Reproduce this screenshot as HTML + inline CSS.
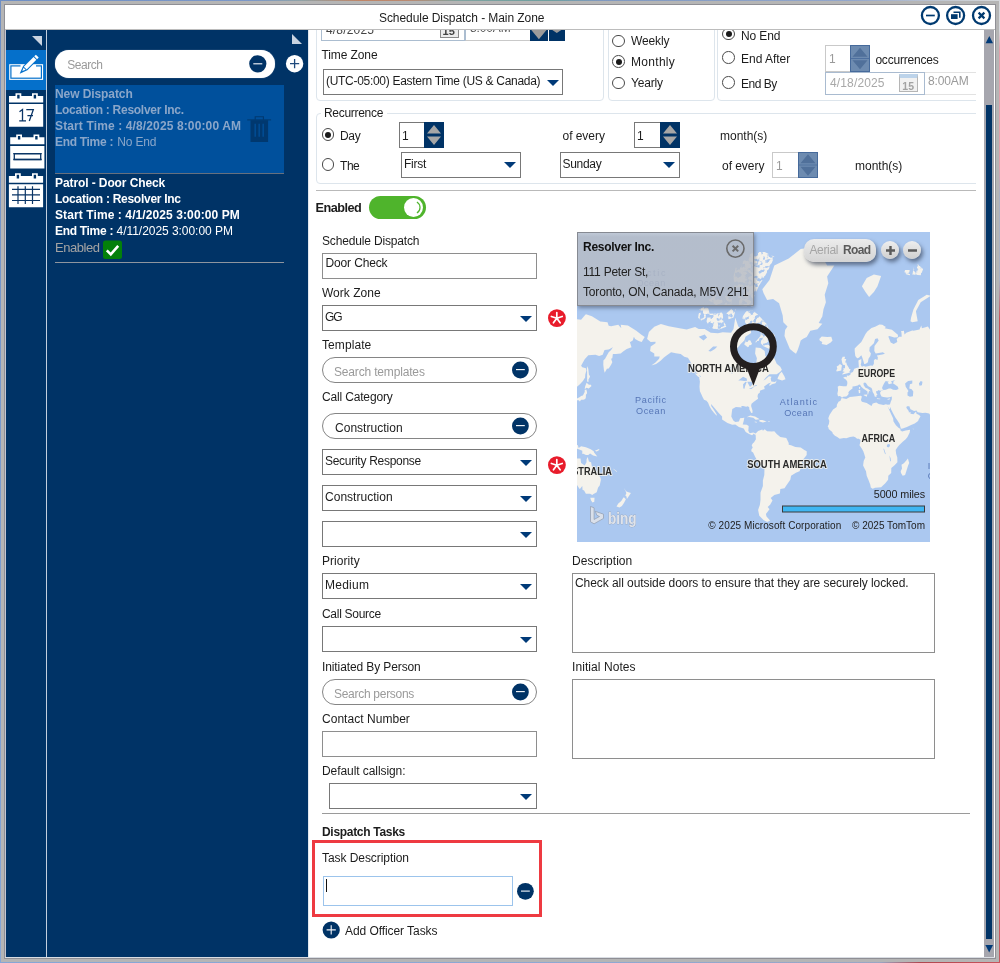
<!DOCTYPE html>
<html>
<head>
<meta charset="utf-8">
<title>Schedule Dispatch - Main Zone</title>
<style>
html,body{margin:0;padding:0;}
body{width:1000px;height:963px;overflow:hidden;position:relative;background:#b5b5b5;font-family:"Liberation Sans",sans-serif;font-size:12px;color:#1c1c1c;}
.a{position:absolute;}
.t{position:absolute;white-space:nowrap;line-height:16px;height:16px;}
.b{font-weight:bold;}
.box{position:absolute;box-sizing:border-box;border:1px solid #787878;background:#fff;}
.pill{position:absolute;box-sizing:border-box;border:1px solid #858585;background:#fff;border-radius:13px;}
.grp{position:absolute;box-sizing:border-box;border:1px solid #dde5ec;border-radius:4px;}
.arr{position:absolute;width:0;height:0;border-left:6px solid transparent;border-right:6px solid transparent;border-top:6px solid #003a78;}
.navy{background:#003366;}
.rad{position:absolute;box-sizing:border-box;margin:0.200px;width:12.600px;height:12.600px;border:1px solid #4a4a4a;border-radius:50%;background:#fff;}
.rad.on:after{content:"";position:absolute;left:2.5px;top:2.5px;width:6px;height:6px;border-radius:50%;background:#1a1a1a;}
.spin{position:absolute;background:#003366;}
.spin.dis{background:#6d8bb0;}
.ph{color:#9a9a9a;}
</style>
</head>
<body>
<div id="root" style="position:absolute;left:0;top:0;width:1000px;height:963px;will-change:transform;">
<!-- outer desktop bleed -->
<div class="a" style="left:0;top:0;width:1000px;height:1px;background:linear-gradient(90deg,#6f8fc4 0%,#7c98c8 25%,#8fa3a8 30%,#c08566 36%,#b98a72 41%,#7fa3a0 46%,#6fa0a0 55%,#8099c0 60%,#93a7cc 85%,#c4c9d1 95%,#d5d8dc 100%);"></div>
<div class="a" style="left:0;top:0;width:1px;height:963px;background:linear-gradient(180deg,#6f8fc4,#86a6d6);"></div>
<div class="a" style="left:999px;top:1px;width:1px;height:962px;background:linear-gradient(180deg,#d5d8dc 0%,#d8dadf 3%,#e0a0ab 5%,#e0a0ab 17%,#a9b0c4 20%,#a9b0c4 29%,#c9545c 33%,#c9545c 100%);"></div>
<div class="a" style="left:0;top:962px;width:1000px;height:1px;background:linear-gradient(90deg,#86a6d6 0%,#8fa8d2 60%,#9aa6c4 88%,#b0474f 92%,#c9545c 100%);"></div>
<!-- window frame -->
<div class="a" style="left:4px;top:4px;width:992px;height:955px;background:#8f8f95;"></div>
<div class="a" style="left:5px;top:5px;width:990px;height:953px;background:#fff;"></div>
<!-- title bar -->
<div class="a" style="left:5px;top:29px;width:990px;height:1px;background:#bcbcbc;"></div>
<div class="t" id="title" style="left:379px;top:10px;letter-spacing:-0.070px;">Schedule Dispatch - Main Zone</div>
<svg class="a" style="left:918px;top:4px;" width="76" height="24" viewBox="918 4 76 24">
 <g fill="none" stroke="#003a70" stroke-width="2.300">
  <circle cx="930.4" cy="15.5" r="8.5"/><circle cx="955.6" cy="15.5" r="8.5"/><circle cx="981.5" cy="15.5" r="8.5"/>
  <path d="M926 15.500h8.800" stroke-width="1.700"/>
  <path d="M978.6 12.6l5.8 5.8M984.4 12.6l-5.8 5.8" stroke-width="2.2"/>
  <path d="M953.5 12.3h6.3v5.4" stroke-width="1.6"/>
 </g>
 <rect x="951" y="14.2" width="6.6" height="4.8" fill="#003a70"/>
</svg>
<!-- left icon strip -->
<div class="a" style="left:5px;top:30px;width:1px;height:927px;background:#c4c6d2;"></div>
<div class="a navy" style="left:6px;top:30px;width:40px;height:927px;"></div>
<div class="a" style="left:5px;top:957px;width:990px;height:1px;background:#d9dde3;"></div>
<div class="a" style="left:46px;top:30px;width:1px;height:927px;background:#c3cfde;"></div>
<div class="a navy" style="left:47px;top:30px;width:261px;height:927px;"></div>
<div class="a" style="left:6px;top:50px;width:40px;height:40px;background:#0570cb;"></div>
<svg class="a" style="left:30px;top:34px;" width="14" height="14" viewBox="30 34 14 14"><path d="M32 36h10v10z" fill="#c9d4e1"/></svg>
<svg class="a" style="left:6px;top:50px;" width="40" height="160" viewBox="6 50 40 160">
 <!-- edit icon -->
 <rect x="9.200" y="64.200" width="33.900" height="15.700" fill="#fff"/>
 <rect x="10.300" y="65.300" width="31.700" height="13.500" fill="#0570cb"/>
 <rect x="11.500" y="66.500" width="29.300" height="11.100" fill="#fff"/>
 <path d="M20.500 64.800h15.500v2.400h-15.500z" fill="#fff"/>
 <path d="M37.57 60.06L33.34 55.81L23.13 65.96L19.67 73.63L27.36 70.21z" fill="#0570cb"/>
 <path d="M38.71 57.52L35.89 54.68L34.26 56.30L37.08 59.14z" fill="#fff"/>
 <path d="M36.37 59.84L33.55 57.01L23.83 66.67L26.65 69.50z" fill="#fff"/>
 <path d="M25.66 69.78L23.55 67.65L22.22 71.09z" fill="#fff"/>
 <!-- calendar 17 -->
 <path d="M9 96h34.200v6.600h-34.200z M9 104h34.200v22.800h-34.200z" fill="#fff"/>
 <path d="M15.500 93.200h5.800v4h-5.800z M32 93.200h5.800v4h-5.800z" fill="#fff"/>
 <path d="M17.200 94.800h2.400v3.600h-2.400z M33.700 94.800h2.400v3.600h-2.400z" fill="#003366"/>
 <path d="M19.500 111.800l3-2.200v11.100M19.200 120.800h6.800M26.300 109.600h7l-4 11.400M27.400 115.600h5.600" fill="none" stroke="#0a3566" stroke-width="1.300"/>
 <!-- week calendar -->
 <path d="M10.200 137.200h34.200v7h-34.200z M10.200 146h34.200v22.600h-34.200z" fill="#fff"/>
 <path d="M16.200 134.400h5.800v4h-5.800z M33.500 134.400h5.800v4h-5.800z" fill="#fff"/>
 <path d="M17.900 136h2.400v3.600h-2.400z M35.200 136h2.400v3.600h-2.400z" fill="#003366"/>
 <rect x="14.300" y="153.700" width="26.400" height="5.800" fill="none" stroke="#0a3566" stroke-width="1.300"/>
 <path d="M13.300 153.700h28.400M13.300 159.500h28.400" stroke="#0a3566" stroke-width="1.300"/>
 <!-- month calendar -->
 <path d="M8.900 176h34.200v6.800h-34.200z M8.900 184.300h34.200v23h-34.200z" fill="#fff"/>
 <path d="M15 173.200h5.800v4h-5.800z M32 173.200h5.800v4h-5.800z" fill="#fff"/>
 <path d="M16.700 174.800h2.400v3.600h-2.400z M33.700 174.800h2.400v3.600h-2.400z" fill="#003366"/>
 <path d="M18 186.200v17.800M25.300 186.200v17.800M32.500 186.200v17.800M12 189.300h28M12 194.900h28M12 200.500h28" stroke="#0a3566" stroke-width="1.200"/>
</svg>

<!-- left list panel -->
<svg class="a" style="left:290px;top:32px;" width="14" height="14" viewBox="290 32 14 14"><path d="M292 34v10h10z" fill="#c9d4e1"/></svg>
<div class="a" style="left:54.500px;top:50px;width:220px;height:28px;border-radius:14px;background:#fff;box-shadow:0 0 1px #9fb0c4;"></div>
<div class="t ph" id="search" style="left:67.200px;top:56.700px;letter-spacing:-0.462px;">Search</div>
<svg class="a" style="left:248px;top:54px;" width="20" height="20" viewBox="0 0 20 20"><circle cx="9.800" cy="9.800" r="8.600" fill="#003366"/><path d="M5.300 9.800h9" stroke="#eef2f7" stroke-width="1.150"/></svg>
<svg class="a" style="left:285px;top:54px;" width="20" height="20" viewBox="0 0 20 20"><circle cx="9.600" cy="9.700" r="8.700" fill="#fff"/><path d="M5 9.700h9.200M9.600 5.100v9.200" stroke="#1f4a7c" stroke-width="1.300"/></svg>
<div class="a" style="left:55px;top:85px;width:229px;height:88px;background:#00509c;"></div>
<div class="a" style="left:55px;top:173px;width:229px;height:1px;background:#67707e;"></div>
<div class="t b" id="l1" style="left:55px;top:86px;color:#8aa6c9;letter-spacing:-0.082px;">New Dispatch</div>
<div class="t b" id="l2" style="left:55px;top:102px;color:#8aa6c9;letter-spacing:-0.278px;">Location : Resolver Inc.</div>
<div class="t b" id="l3" style="left:55px;top:118px;color:#8aa6c9;letter-spacing:0.126px;">Start Time : 4/8/2025 8:00:00 AM</div>
<div class="t b" id="l4" style="left:55px;top:134px;color:#8aa6c9;letter-spacing:-0.304px;">End Time :</div>
<div class="t" id="l4b" style="left:117.200px;top:134px;color:#8aa6c9;letter-spacing:-0.138px;">No End</div>
<svg class="a" style="left:245px;top:114px;" width="30" height="30" viewBox="245 114 30 30"><path d="M250.500 119.800h17.600v22.200h-17.600z" fill="#00386f"/><path d="M247.200 119.300h23.900v1.200h-23.900z" fill="#003c76"/><path d="M255.200 119.800v-3.100h8.200v3.100" fill="none" stroke="#00386f" stroke-width="1.100"/><path d="M254.400 123.800h1.600v13h-1.600zM258.400 123.800h1.600v13h-1.600zM262.400 123.800h1.600v13h-1.600z" fill="#004b92"/></svg>

<div class="t b" id="m1" style="left:55px;top:175px;color:#fff;letter-spacing:-0.096px;">Patrol - Door Check</div>
<div class="t b" id="m2" style="left:55px;top:191px;color:#fff;letter-spacing:-0.272px;">Location : Resolver Inc</div>
<div class="t b" id="m3" style="left:55px;top:207px;color:#fff;letter-spacing:0.095px;">Start Time : 4/1/2025 3:00:00 PM</div>
<div class="t b" id="m4" style="left:55px;top:223px;color:#fff;letter-spacing:-0.304px;">End Time :</div>
<div class="t" id="m4b" style="left:116.600px;top:223px;color:#fff;letter-spacing:-0.047px;">4/11/2025 3:00:00 PM</div>
<div class="t" id="m5" style="left:55px;top:240px;color:#a3a3a3;font-size:13px;letter-spacing:-0.444px;">Enabled</div>
<svg class="a" style="left:103px;top:240px;" width="20" height="20" viewBox="0 0 20 20"><rect x="0" y="0.500" width="19" height="18.500" rx="2.500" fill="#03800a"/><path d="M3.800 10.300l4 4 7.400-8.400" fill="none" stroke="#fff" stroke-width="2.600"/></svg>
<div class="a" style="left:55px;top:262px;width:229px;height:1px;background:#8e959f;"></div>
<!-- main content -->
<div class="a" style="left:308px;top:30px;width:676px;height:927px;background:#fff;"></div>
<div class="a" style="left:308px;top:30px;width:1px;height:927px;background:#e1e8ef;"></div>
<!-- top clipped groups -->
<div class="a" style="left:308px;top:30px;width:668px;height:160px;overflow:hidden;">
 <div class="a" style="left:-308px;top:-30px;width:1000px;height:963px;">
  <div class="grp" style="left:316px;top:10px;width:288px;height:91px;"></div>
  <div class="grp" style="left:608px;top:10px;width:107px;height:91px;"></div>
  <div class="grp" style="left:717px;top:10px;width:280px;height:91px;"></div>
  <div class="grp" style="left:316px;top:113px;width:680px;height:71px;"></div>
  <!-- date/time row (clipped by title) -->
  <div class="box" style="left:321px;top:14px;width:144px;height:27px;border-color:#abbdd0;"></div>
  <div class="t" style="left:326px;top:21.500px;color:#444;letter-spacing:0.183px;" id="d0">4/8/2025</div>
  <div class="a" style="left:439.500px;top:20px;width:19px;height:18px;box-sizing:border-box;border:1px solid #8a8a8a;background:#ececec;"></div>
  <div class="t b" style="left:442.500px;top:24.500px;font-size:11px;line-height:12px;color:#444;letter-spacing:0.200px;">15</div>
  <div class="box" style="left:465px;top:14px;width:66px;height:27px;border-color:#c9c9c9;border-left-color:#abbdd0;"></div>
  <div class="t" style="left:470px;top:20px;color:#555;letter-spacing:-0.139px;" id="d1">8:00AM</div>
  <div class="spin" style="left:530px;top:14px;width:18px;height:27px;"></div>
  <div class="spin" style="left:549px;top:14px;width:16px;height:27px;"></div>
  <div class="rad on" style="left:722px;top:27.500px;"></div><div class="t" id="e1" style="left:741px;top:27.500px;letter-spacing:-0.138px;">No End</div>
  <svg class="a" style="left:530px;top:30px;" width="36" height="11" viewBox="530 30 36 11"><path d="M531.300 30h15.200l-7.600 9.200zM552.300 30h9l-4.500 3z" fill="#9a9a9a"/></svg>
 </div>
</div>
<div class="t" id="tz" style="left:321.500px;top:47px;letter-spacing:-0.099px;">Time Zone</div>
<div class="box" style="left:323px;top:69px;width:240px;height:26px;"></div>
<div class="t" id="tzv" style="left:326px;top:73px;letter-spacing:-0.293px;">(UTC-05:00) Eastern Time (US &amp; Canada)</div>
<div class="arr" style="left:546.500px;top:80px;"></div>
<!-- frequency radios -->
<div class="rad" style="left:612px;top:34.500px;"></div><div class="t" id="r1" style="left:631px;top:33px;letter-spacing:-0.117px;">Weekly</div>
<div class="rad on" style="left:612px;top:55px;"></div><div class="t" id="r2" style="left:631px;top:54px;letter-spacing:0.301px;">Monthly</div>
<div class="rad" style="left:612px;top:76.500px;"></div><div class="t" id="r3" style="left:631px;top:75px;letter-spacing:-0.170px;">Yearly</div>
<!-- end radios -->
<div class="rad" style="left:722px;top:51px;"></div><div class="t" id="e2" style="left:741px;top:50.800px;letter-spacing:-0.018px;">End After</div>
<div class="rad" style="left:722px;top:76px;"></div><div class="t" id="e3" style="left:741px;top:75.500px;letter-spacing:-0.472px;">End By</div>
<div class="box" style="left:825px;top:45px;width:26px;height:27px;border-color:#c9c9c9;"></div>
<div class="t" style="left:829px;top:51px;color:#9a9a9a;letter-spacing:-0.205px;">1</div>
<div class="spin dis" style="left:850px;top:45px;width:20px;height:27px;"></div>
<svg class="a" style="left:850px;top:45px;" width="20" height="27" viewBox="0 0 20 27"><path d="M2.500 11.800h15l-7.500-9zM2.500 15.200h15l-7.500 9z" fill="#50709a"/><rect x="0.500" y="0.500" width="19" height="26" fill="none" stroke="#466a9b"/><path d="M0 13.500h20" stroke="#466a9b" stroke-width="0.800"/></svg>
<div class="t" id="occ" style="left:875.400px;top:52px;letter-spacing:-0.195px;">occurrences</div>
<div class="box" style="left:825px;top:71.500px;width:100px;height:23px;border-color:#a9bbd0;"></div>
<div class="t" id="eb" style="left:830px;top:75px;color:#a8a8a8;letter-spacing:0.140px;">4/18/2025</div>
<div class="a" style="left:899px;top:74px;width:19px;height:18px;box-sizing:border-box;border:1px solid #b5b5b5;background:#f1f1f1;border-top:4px solid #bcd3ea;"></div>
<div class="t b" style="left:902.200px;top:79.500px;font-size:10.500px;line-height:12px;color:#a2a2a2;letter-spacing:0.300px;">15</div>
<div class="a" style="left:925px;top:71.500px;width:51px;height:23px;box-sizing:border-box;border-top:1px solid #e2e2e2;border-bottom:1px solid #e2e2e2;"></div>
<div class="t" id="ebt" style="left:928px;top:73px;color:#9a9a9a;letter-spacing:-0.139px;">8:00AM</div>
<!-- recurrence -->
<div class="a" style="left:321px;top:106px;width:66px;height:14px;background:#fff;"></div>
<div class="t" id="rec" style="left:324px;top:105px;letter-spacing:-0.303px;">Recurrence</div>
<div class="rad on" style="left:321.500px;top:128px;"></div><div class="t" id="day" style="left:340px;top:127.500px;letter-spacing:-0.344px;">Day</div>
<div class="box" style="left:398.500px;top:122px;width:26px;height:26px;"></div><div class="t" style="left:402px;top:128px;letter-spacing:-0.205px;">1</div>
<div class="spin" style="left:423.500px;top:122px;width:20px;height:26px;"></div>
<svg class="a" style="left:423.500px;top:122px;" width="20" height="26" viewBox="0 0 20 26"><path d="M3 11.500h14l-7-8.500zM3 14.500h14l-7 8.500z" fill="#a6a6a6"/></svg>
<div class="t" id="oe1" style="left:562.500px;top:128px;letter-spacing:-0.043px;">of every</div>
<div class="box" style="left:633.500px;top:122px;width:27px;height:26px;"></div><div class="t" style="left:637px;top:128px;letter-spacing:-0.205px;">1</div>
<div class="spin" style="left:659.500px;top:122px;width:20px;height:26px;"></div>
<svg class="a" style="left:659.500px;top:122px;" width="20" height="26" viewBox="0 0 20 26"><path d="M3 11.500h14l-7-8.500zM3 14.500h14l-7 8.500z" fill="#a6a6a6"/></svg>
<div class="t" id="mo1" style="left:720px;top:128px;letter-spacing:-0.005px;">month(s)</div>
<div class="rad" style="left:321.500px;top:158px;"></div><div class="t" id="the" style="left:340px;top:157.500px;letter-spacing:-0.444px;">The</div>
<div class="box" style="left:400.500px;top:152px;width:120px;height:26px;"></div><div class="t" id="first" style="left:404px;top:156px;letter-spacing:-0.247px;">First</div><div class="arr" style="left:504px;top:162px;"></div>
<div class="box" style="left:559.500px;top:152px;width:120px;height:26px;"></div><div class="t" id="sun" style="left:562.500px;top:156px;letter-spacing:-0.304px;">Sunday</div><div class="arr" style="left:663px;top:162px;"></div>
<div class="t" id="oe2" style="left:722px;top:158px;letter-spacing:-0.043px;">of every</div>
<div class="box" style="left:771.500px;top:152px;width:27px;height:26px;border-color:#c9c9c9;"></div><div class="t" style="left:776px;top:158px;color:#9a9a9a;letter-spacing:-0.205px;">1</div>
<div class="spin dis" style="left:797.500px;top:152px;width:20px;height:26px;"></div>
<svg class="a" style="left:797.500px;top:152px;" width="20" height="26" viewBox="0 0 20 26"><path d="M2.500 11.300h15l-7.500-9zM2.500 14.700h15l-7.500 9z" fill="#50709a"/><rect x="0.500" y="0.500" width="19" height="25" fill="none" stroke="#466a9b"/><path d="M0 13h20" stroke="#466a9b" stroke-width="0.800"/></svg>
<div class="t" id="mo2" style="left:855px;top:158px;letter-spacing:-0.005px;">month(s)</div>
<div class="a" style="left:316px;top:190px;width:660px;height:1px;background:#b9b9b9;"></div>
<!-- Enabled toggle -->
<div class="t b" id="en" style="left:315.600px;top:200px;font-size:12.700px;letter-spacing:-0.514px;">Enabled</div>
<div class="a" style="left:369.300px;top:196px;width:56.700px;height:23px;border-radius:11.500px;background:#4fb42c;"></div>
<div class="a" style="left:403.600px;top:197.700px;width:19.600px;height:19.600px;border-radius:50%;background:#fff;"></div>
<svg class="a" style="left:404px;top:196px;" width="22" height="23" viewBox="0 0 22 23"><path d="M12.90 5.90A6.6 6.6 0 0 1 12.90 17.10" fill="none" stroke="#4fb42c" stroke-width="1.200"/></svg>
<!-- left column fields -->
<div class="t" id="f1" style="left:322px;top:233px;letter-spacing:-0.166px;">Schedule Dispatch</div>
<div class="box" style="left:322px;top:253px;width:214.500px;height:25.500px;border-color:#8e8e8e;"></div><div class="t" id="f1v" style="left:325.500px;top:255px;letter-spacing:-0.143px;">Door Check</div>
<div class="t" id="f2" style="left:322px;top:285px;letter-spacing:0.014px;">Work Zone</div>
<div class="box" style="left:322px;top:305px;width:214.500px;height:26px;"></div><div class="t" id="f2v" style="left:325px;top:309px;letter-spacing:-1.101px;">GG</div><div class="arr" style="left:520px;top:315.500px;"></div>
<div class="t" id="f3" style="left:322px;top:337px;letter-spacing:0.076px;">Template</div>
<div class="pill" style="left:322px;top:357px;width:214.500px;height:26px;"></div><div class="t ph" id="f3v" style="left:334px;top:364px;letter-spacing:-0.167px;">Search templates</div>
<div class="t" id="f4" style="left:322px;top:389px;letter-spacing:-0.164px;">Call Category</div>
<div class="pill" style="left:322px;top:413px;width:214.500px;height:26px;"></div><div class="t" id="f4v" style="left:335px;top:420px;letter-spacing:0.026px;">Construction</div>
<div class="box" style="left:322px;top:449px;width:214.500px;height:26px;"></div><div class="t" id="f5v" style="left:325px;top:453px;letter-spacing:-0.279px;">Security Response</div><div class="arr" style="left:520px;top:460px;"></div>
<div class="box" style="left:322px;top:485px;width:214.500px;height:26px;"></div><div class="t" id="f6v" style="left:325px;top:489px;letter-spacing:0.026px;">Construction</div><div class="arr" style="left:520px;top:496px;"></div>
<div class="box" style="left:322px;top:521px;width:214.500px;height:26px;"></div><div class="arr" style="left:520px;top:532px;"></div>
<div class="t" id="f7" style="left:322px;top:553px;letter-spacing:0.053px;">Priority</div>
<div class="box" style="left:322px;top:573px;width:214.500px;height:26px;"></div><div class="t" id="f7v" style="left:325px;top:577px;letter-spacing:0.239px;">Medium</div><div class="arr" style="left:520px;top:584px;"></div>
<div class="t" id="f8" style="left:322px;top:606px;letter-spacing:-0.293px;">Call Source</div>
<div class="box" style="left:322px;top:626px;width:214.500px;height:26px;"></div><div class="arr" style="left:520px;top:637px;"></div>
<div class="t" id="f9" style="left:322px;top:659px;letter-spacing:-0.108px;">Initiated By Person</div>
<div class="pill" style="left:322px;top:679px;width:214.500px;height:26px;"></div><div class="t ph" id="f9v" style="left:334px;top:686px;letter-spacing:-0.286px;">Search persons</div>
<div class="t" id="f10" style="left:322px;top:711px;letter-spacing:0.037px;">Contact Number</div>
<div class="box" style="left:322px;top:731px;width:214.500px;height:26px;border-color:#8e8e8e;"></div>
<div class="t" id="f11" style="left:322px;top:763px;letter-spacing:-0.072px;">Default callsign:</div>
<div class="box" style="left:329px;top:783px;width:207.500px;height:26px;"></div><div class="arr" style="left:520px;top:794px;"></div>
<div class="a" style="left:322px;top:813px;width:648px;height:1px;background:#9a9a9a;"></div>
<div class="t b" id="dt" style="left:322px;top:824px;letter-spacing:-0.306px;">Dispatch Tasks</div>
<div class="a" style="left:312.300px;top:840.400px;width:229.700px;height:76.600px;box-sizing:border-box;border:3.400px solid #ee3a41;"></div>
<div class="t" id="td" style="left:322px;top:849.500px;letter-spacing:-0.066px;">Task Description</div>
<div class="box" style="left:322.900px;top:875.700px;width:190.500px;height:30px;border-color:#9cc4ec;"></div>
<div class="a" style="left:325.700px;top:878.800px;width:1px;height:13.500px;background:#111;"></div>
<svg class="a" style="left:321px;top:920px;" width="20" height="20" viewBox="0 0 20 20"><circle cx="10.200" cy="10" r="8.600" fill="#003366"/><path d="M5.600 9.900h9.200M10.200 5.300v9.200" stroke="#f1f4f8" stroke-width="1.100"/></svg>
<div class="t" id="aot" style="left:345px;top:923px;letter-spacing:-0.069px;">Add Officer Tasks</div>
<!-- round minus buttons -->
<svg class="a" style="left:510px;top:360px;" width="20" height="20" viewBox="0 0 20 20"><circle cx="10.400" cy="10" r="8.400" fill="#003366"/><path d="M6 9.600h8.800" stroke="#eef2f7" stroke-width="1.150"/></svg>
<svg class="a" style="left:510px;top:416px;" width="20" height="20" viewBox="0 0 20 20"><circle cx="10.400" cy="10" r="8.400" fill="#003366"/><path d="M6 9.600h8.800" stroke="#eef2f7" stroke-width="1.150"/></svg>
<svg class="a" style="left:510px;top:682px;" width="20" height="20" viewBox="0 0 20 20"><circle cx="10.400" cy="10" r="8.400" fill="#003366"/><path d="M6 9.600h8.800" stroke="#eef2f7" stroke-width="1.150"/></svg>
<svg class="a" style="left:515px;top:881px;" width="20" height="20" viewBox="0 0 20 20"><circle cx="10.400" cy="10.300" r="8.400" fill="#003366"/><path d="M6 10.100h8.800" stroke="#eef2f7" stroke-width="1.150"/></svg>
<!-- required icons -->
<svg class="a" style="left:547px;top:308px;" width="20" height="20" viewBox="0 0 20 20"><circle cx="9.900" cy="10.100" r="8.900" fill="#e81c2b"/><path d="M9.80 10.20L9.80 4.50M9.80 10.20L15.22 8.44M9.80 10.20L13.15 14.81M9.80 10.20L6.45 14.81M9.80 10.20L4.38 8.44" stroke="#fff" stroke-width="1.700" stroke-linecap="round"/></svg>
<svg class="a" style="left:547px;top:455px;" width="20" height="20" viewBox="0 0 20 20"><circle cx="9.900" cy="10.100" r="8.900" fill="#e81c2b"/><path d="M9.80 10.20L9.80 4.50M9.80 10.20L15.22 8.44M9.80 10.20L13.15 14.81M9.80 10.20L6.45 14.81M9.80 10.20L4.38 8.44" stroke="#fff" stroke-width="1.700" stroke-linecap="round"/></svg>
<!-- right column -->
<div class="t" id="g1" style="left:572px;top:553px;letter-spacing:0.020px;">Description</div>
<div class="box" style="left:572px;top:573px;width:363px;height:79.500px;border-color:#8e8e8e;"></div>
<div class="t" id="g1v" style="left:575px;top:575px;letter-spacing:-0.062px;">Check all outside doors to ensure that they are securely locked.</div>
<div class="t" id="g2" style="left:572px;top:659px;letter-spacing:0.069px;">Initial Notes</div>
<div class="box" style="left:572px;top:679px;width:363px;height:79.500px;border-color:#8e8e8e;"></div>
<div class="a" style="left:577px;top:232px;width:353px;height:310px;overflow:hidden;background:#abc8f0;">
<svg class="a" style="left:0;top:0;" width="353" height="310" viewBox="0 0 353 310" font-family="Liberation Sans, sans-serif">
<defs><filter id="bl" x="-5%" y="-5%" width="110%" height="110%"><feGaussianBlur stdDeviation="0.45"/></filter><filter id="sp" x="0" y="0" width="100%" height="100%" filterUnits="userSpaceOnUse"><feTurbulence type="fractalNoise" baseFrequency="0.22" numOctaves="2" seed="7" result="n"/><feColorMatrix in="n" type="matrix" values="0 0 0 0 0 0 0 0 0 0 0 0 0 0 0 0 0 0 7 -2.6" result="m"/><feComposite in="SourceGraphic" in2="m" operator="in"/><feGaussianBlur stdDeviation="0.5"/></filter></defs>
<g filter="url(#bl)"><path d="M70.1 107.1L71.9 100.0L77.3 94.7L83.9 91.9L91.7 94.2L102.5 96.3L109.7 97.4L118.1 95.0L121.7 96.9L127.7 97.1L133.7 100.8L140.9 101.3L145.7 100.2L154.1 100.8L156.5 96.9L158.3 85.8L161.3 94.5L166.1 97.9L169.7 94.5L173.3 94.5L174.1 101.1L168.5 104.7L167.3 108.5L163.7 111.9L160.1 116.6L158.3 123.9L160.7 128.4L166.1 129.5L169.7 132.1L173.1 132.5L173.3 136.8L175.1 140.1L176.9 139.4L176.9 134.8L179.3 130.6L179.9 126.2L178.1 121.6L178.7 115.6L183.5 116.1L187.7 119.1L188.3 123.9L190.7 125.5L193.1 122.7L194.3 120.6L197.3 126.2L199.7 131.7L203.3 134.8L204.9 137.8L203.3 139.8L199.7 142.2L192.5 142.2L188.9 145.4L186.5 148.4L188.3 147.5L191.9 144.3L194.5 144.8L193.7 146.6L194.3 149.4L197.9 150.1L199.7 148.4L198.5 151.2L194.9 152.3L192.5 154.0L192.5 152.3L194.3 150.6L191.3 151.5L188.9 153.2L187.1 154.5L187.7 156.9L185.3 157.7L182.9 158.7L182.9 160.4L181.1 162.0L180.5 164.2L181.1 166.8L179.3 167.9L176.9 169.8L174.5 171.8L174.1 173.9L175.5 178.4L175.5 180.7L174.3 181.0L172.3 177.3L172.3 175.4L170.9 174.3L169.1 174.7L166.1 173.9L164.3 174.1L164.7 175.6L162.5 175.3L158.9 174.9L155.3 177.1L154.9 179.8L154.3 184.4L156.3 188.6L158.3 189.9L161.9 189.5L163.1 186.3L167.3 185.7L166.7 188.9L165.7 192.6L169.7 192.8L171.7 193.9L171.3 198.8L172.7 201.3L176.3 200.6L178.7 201.6L178.3 203.3L176.9 201.5L175.1 203.3L172.1 202.1L168.7 200.0L166.7 196.4L161.9 195.1L158.3 192.4L155.3 192.8L150.5 191.0L145.1 187.6L145.1 184.4L141.5 180.7L137.3 175.7L134.1 172.0L134.3 174.3L137.3 178.4L139.7 182.4L139.7 183.7L137.1 181.1L134.5 177.8L132.5 174.3L131.1 170.7L129.5 168.7L127.0 167.8L125.3 164.5L124.7 163.0L122.9 159.2L122.5 154.8L122.9 149.4L122.1 145.5L124.1 144.5L119.3 140.7L117.5 136.8L115.1 133.4L113.3 129.5L110.9 125.8L107.3 124.8L103.7 122.0L98.9 121.3L94.1 120.3L89.9 123.2L86.9 125.5L83.3 129.1L79.1 132.1L74.3 133.6L78.5 130.6L82.1 126.7L82.7 124.4L77.3 124.6L77.3 121.6L73.1 119.1L73.7 114.5L78.5 111.3L78.5 109.7L73.7 109.9ZM200.5 147.0L205.1 148.4L208.5 147.2L207.5 144.5L204.7 139.8L202.7 141.7L200.9 145.4ZM117.7 141.3L121.7 142.2L123.6 145.5L121.1 144.8ZM169.7 185.3L173.3 183.6L178.1 184.5L182.7 187.3L178.7 187.7L176.3 185.7L172.1 185.0ZM182.4 188.0L185.3 187.9L189.6 189.4L185.9 190.4L182.4 189.6ZM177.7 189.6L180.1 189.9L179.9 190.4L177.9 190.3ZM191.1 189.5L192.9 189.6L192.7 190.1L191.1 190.1ZM185.3 57.2L192.5 48.0L197.3 33.4L211.7 26.6L223.7 17.0L235.7 14.9L245.3 24.7L250.1 33.4L257.3 33.4L250.1 44.6L251.3 51.2L247.7 62.8L248.9 70.3L246.5 77.2L245.3 84.6L241.7 91.0L245.3 91.7L240.5 97.2L233.3 98.8L229.7 105.0L226.1 106.8L223.7 108.5L222.5 112.7L220.7 117.9L219.0 121.8L216.5 119.9L212.9 117.1L210.5 111.3L207.5 104.1L208.1 97.9L210.5 94.5L206.3 90.3L205.7 83.4L202.1 71.3L196.1 66.9L190.1 67.9L186.5 61.1ZM242.3 107.1L244.7 104.4L250.1 105.0L254.3 104.7L255.5 108.5L253.7 110.5L249.5 112.9L244.7 111.9L245.3 109.9L242.9 108.8ZM178.7 201.6L181.1 199.1L185.3 197.6L185.9 198.8L187.7 197.2L190.1 199.3L194.9 199.4L197.3 199.2L199.7 201.9L203.3 204.9L209.3 206.1L211.7 210.9L211.7 212.7L214.1 213.3L218.3 215.1L223.7 215.5L227.3 218.1L229.7 219.3L229.7 222.9L227.3 226.0L224.9 229.1L224.9 234.1L222.5 239.2L218.9 240.7L214.1 243.8L213.3 247.8L209.3 253.4L207.5 256.3L203.3 257.0L202.9 261.5L197.3 263.0L193.7 266.1L195.5 268.5L193.1 272.7L190.7 275.0L192.5 277.3L188.9 282.1L189.5 284.6L193.1 288.6L190.1 289.9L186.5 288.1L182.3 283.8L181.1 278.1L182.9 272.7L183.5 267.7L183.5 260.7L185.9 254.1L185.9 248.5L187.3 243.1L187.5 234.7L184.7 232.6L180.5 229.1L178.1 224.8L176.1 220.5L174.3 219.3L174.5 217.3L175.7 215.7L174.7 213.3L175.7 211.5L177.1 210.3L178.9 207.3L178.7 203.7ZM264.6 166.0L269.3 166.9L272.9 165.0L277.7 164.5L283.7 163.8L284.9 164.4L283.9 167.9L284.9 169.7L289.7 171.1L294.5 173.9L295.7 171.5L299.3 170.5L301.7 172.0L306.5 172.9L308.9 172.2L310.7 172.7L310.7 174.5L312.5 178.4L314.3 182.4L316.1 186.3L316.5 189.5L318.9 193.3L321.5 195.7L323.5 197.0L323.3 198.2L325.1 199.4L328.7 198.6L333.1 197.7L332.7 200.6L330.5 204.9L328.7 207.3L325.7 209.7L322.1 213.3L320.3 215.5L318.7 218.1L319.1 221.7L320.3 225.4L320.4 230.3L317.3 233.4L314.3 236.0L314.2 241.1L311.3 243.8L311.1 247.8L308.3 251.3L304.1 255.2L298.1 255.8L295.7 256.7L293.8 255.5L293.3 252.7L291.5 247.9L289.7 243.8L289.0 239.2L286.1 233.4L286.7 229.1L288.3 225.4L287.3 222.3L286.3 219.3L284.9 216.7L282.5 213.3L283.1 210.9L283.5 207.9L281.9 206.7L280.1 206.8L278.3 205.2L276.5 204.5L272.9 204.9L269.3 206.3L266.9 205.9L262.7 206.8L260.3 205.1L257.9 203.7L255.7 201.5L255.3 200.0L253.7 198.8L251.7 197.1L251.5 195.7L250.7 194.3L251.9 192.0L252.3 188.9L251.3 186.3L252.5 183.1L254.1 180.4L256.1 177.5L258.3 176.1L259.7 175.0L259.9 172.7L261.5 169.8L263.5 168.7ZM330.9 226.6L332.2 230.9L331.1 233.4L329.3 239.2L328.1 243.1L325.7 243.8L324.0 241.1L323.7 239.2L325.0 236.6L324.5 232.8L326.9 231.3L329.3 228.5ZM265.0 165.7L264.1 164.8L262.8 163.9L261.0 164.2L260.4 161.7L261.1 158.1L260.7 154.8L262.1 153.7L266.3 154.2L269.5 154.2L270.3 152.0L270.3 149.8L269.1 147.7L266.1 145.7L268.1 144.8L269.8 145.2L269.8 143.4L271.7 143.7L273.5 142.4L273.7 140.9L275.9 140.0L277.3 136.8L280.1 135.8L281.9 135.4L281.7 132.7L281.4 128.4L284.3 126.9L284.3 130.6L283.7 132.7L284.9 134.8L286.7 134.0L288.7 134.8L293.9 133.4L295.7 133.8L296.9 131.7L296.9 128.4L298.1 127.1L300.5 128.0L300.9 125.5L299.9 123.4L305.3 122.5L307.9 121.8L305.9 120.3L301.7 121.1L298.7 121.6L297.3 119.1L297.5 114.0L301.7 108.5L300.5 106.2L298.1 107.1L296.9 111.3L292.7 115.3L292.3 119.1L293.9 121.6L293.3 123.9L291.5 126.7L290.9 130.2L288.9 131.7L287.1 131.9L286.7 130.0L285.1 125.1L284.3 123.2L281.9 125.8L280.1 126.2L278.3 123.9L277.7 119.1L277.7 116.6L280.1 114.0L284.3 109.9L286.7 105.6L288.5 102.0L290.3 99.5L294.5 96.1L298.1 94.7L302.5 92.5L305.3 92.8L308.9 95.0L307.7 96.3L311.3 97.1L314.9 97.7L320.9 102.7L320.9 105.2L317.3 105.4L312.5 104.0L311.3 104.4L313.7 110.5L316.7 111.9L320.3 109.9L319.7 107.1L322.1 104.7L324.7 104.7L324.5 100.8L323.9 99.2L326.9 98.8L327.5 102.6L329.3 100.8L335.3 98.5L336.5 98.8L342.5 97.5L344.3 93.5L344.9 96.2L348.5 95.2L350.9 94.5L353.3 97.9L354.5 96.9L355.7 104.1L361.7 105.6L361.7 185.0L358.1 186.3L355.7 186.3L354.3 184.6L352.1 181.4L348.5 180.8L345.5 181.0L340.7 180.3L339.5 178.4L337.1 179.0L333.5 177.3L332.3 174.3L329.9 174.3L329.3 175.7L331.7 179.1L331.9 180.4L333.6 179.9L333.5 181.8L336.5 182.2L339.1 179.5L339.5 181.8L342.1 182.9L343.5 184.4L341.9 187.1L341.1 189.0L337.7 191.4L334.1 193.1L329.9 195.1L325.7 196.6L323.9 196.7L323.1 194.1L322.7 192.0L320.3 188.2L318.5 185.7L316.3 181.8L313.9 177.1L313.6 175.0L312.7 177.1L312.4 177.3L310.8 174.5L310.5 172.7L312.9 172.5L313.7 170.1L314.8 167.2L314.9 164.5L312.5 165.3L310.1 165.4L308.3 165.3L306.5 165.0L304.5 164.5L303.3 162.0L303.1 160.4L304.1 158.9L306.5 158.1L308.9 157.7L311.9 156.5L313.7 156.5L316.1 157.7L319.1 158.1L321.5 157.1L320.9 154.8L317.9 152.5L316.1 151.5L316.7 148.9L318.5 147.7L313.9 149.4L315.4 151.2L311.9 152.3L310.7 150.6L312.0 149.8L308.7 148.9L307.3 151.0L306.0 153.5L305.1 155.7L305.5 157.3L306.5 157.7L304.7 158.4L302.9 158.7L301.7 158.1L300.1 159.3L299.1 159.0L299.3 160.9L300.5 162.7L299.3 163.5L299.5 165.0L297.7 164.5L297.1 162.3L295.7 160.1L295.1 157.3L294.5 156.1L290.9 154.0L289.1 151.2L288.0 150.5L286.5 151.0L286.7 153.2L288.5 155.7L290.9 156.8L293.8 159.3L292.1 158.9L291.5 160.7L291.0 162.7L290.5 161.4L290.5 159.6L288.5 158.1L286.5 156.8L284.3 154.8L283.1 152.8L282.1 152.5L280.7 153.5L277.7 154.3L275.5 154.5L275.5 156.5L274.1 157.6L272.3 158.9L271.3 160.6L271.7 161.7L270.9 163.0L269.3 164.5L266.3 164.7ZM264.9 142.4L267.5 142.0L270.5 141.3L273.4 140.3L272.3 139.8L273.7 137.4L272.1 136.8L271.7 135.4L269.9 132.7L269.3 130.6L268.1 130.6L269.3 127.1L267.5 126.9L268.1 124.8L265.7 124.8L264.5 127.3L265.1 130.6L265.9 132.7L267.9 132.9L268.1 135.0L267.9 136.2L266.3 136.2L266.7 137.8L265.5 139.2L267.9 140.0L266.3 140.7ZM259.7 139.6L264.3 138.4L264.5 135.8L265.0 133.6L262.9 132.1L261.5 133.4L259.7 134.4L260.3 136.4L259.3 138.4ZM284.9 54.3L289.7 46.0L296.9 42.5L304.1 43.9L300.5 54.3L296.9 60.0L292.1 64.9L288.5 60.0ZM333.5 89.2L335.3 90.3L340.7 89.2L338.9 79.3L343.7 70.3L353.9 63.8L349.7 62.8L341.3 67.9L336.5 77.2L334.1 85.4ZM286.7 162.7L290.3 162.4L289.8 164.7L286.7 163.3ZM281.5 158.1L283.3 158.1L283.2 160.9L281.9 161.2ZM282.0 155.0L283.1 155.0L283.0 157.3L282.3 157.1ZM299.9 166.3L303.3 166.8L303.1 167.2L300.0 166.9ZM310.5 167.1L313.2 166.2L312.5 167.4L310.7 167.7ZM335.7 196.7L337.1 196.9L337.0 197.2L335.8 197.1ZM-6.7 81.4L0.0 87.3L4.1 87.7L7.7 83.4L8.9 82.2L14.9 84.2L19.7 87.3L23.3 89.6L30.5 90.3L31.7 93.8L34.1 94.2L41.3 92.8L44.3 96.2L43.7 92.8L50.9 93.5L55.7 96.5L59.3 98.8L64.1 102.6L67.7 105.0L64.7 109.9L61.7 109.1L58.1 107.1L56.9 104.7L55.7 108.5L53.3 109.9L52.7 109.4L54.5 115.3L49.7 117.1L46.1 119.4L43.7 121.6L38.9 122.0L35.9 122.0L35.3 126.2L34.1 126.7L35.3 130.2L34.1 132.7L31.7 136.4L29.9 136.8L27.7 140.7L26.9 137.8L26.3 132.7L26.4 128.4L28.1 126.7L31.7 120.3L34.1 117.9L35.9 115.3L31.7 117.4L27.5 117.9L25.7 122.7L22.1 123.9L18.5 122.7L11.3 123.2L7.7 127.3L4.1 133.8L5.3 135.2L8.9 136.2L9.4 138.4L8.3 142.6L8.1 145.4L5.9 148.9L2.9 152.3L0.0 154.8L-6.7 156.5ZM-6.7 168.7L0.0 166.5L2.9 165.0L4.1 163.9L5.9 163.5L7.7 160.0L7.7 158.1L9.3 157.4L9.9 159.6L10.1 161.2L8.9 162.7L8.9 164.5L8.7 166.2L7.7 167.2L6.3 167.7L4.1 167.8L2.9 169.4L1.7 168.2L0.0 168.2L-6.7 170.1ZM7.7 157.3L8.1 154.5L9.6 150.8L11.9 152.8L14.1 152.8L14.3 154.3L11.7 156.5L9.5 155.7ZM10.1 134.2L11.3 136.8L11.9 142.6L13.1 144.5L11.3 148.0L11.9 149.4L10.1 149.8L10.1 145.4L10.1 139.8L9.9 135.8ZM-6.7 226.6L0.0 226.4L3.5 226.6L4.1 230.9L7.7 233.6L9.5 230.3L9.6 227.2L10.7 225.0L11.9 229.4L14.1 230.3L14.9 234.7L18.5 237.9L20.9 241.5L23.5 245.8L23.9 247.8L22.7 253.4L21.1 255.5L19.7 260.3L16.1 262.2L15.3 263.0L13.1 261.8L8.9 261.8L7.1 258.5L5.5 257.7L5.3 254.1L2.9 257.0L2.3 256.5L0.0 253.0L-6.7 252.7ZM13.3 265.8L17.5 265.8L17.3 269.7L15.5 270.4L14.1 268.5ZM-6.7 212.9L0.0 212.9L0.7 213.1L1.7 216.1L4.1 214.3L8.9 215.2L13.7 217.3L16.7 219.3L17.1 220.5L20.3 224.5L16.1 223.6L13.1 221.4L11.3 222.9L8.9 223.1L6.5 221.7L5.3 222.1L5.3 218.7L1.7 217.3L0.0 216.7L-6.7 216.7ZM17.9 218.7L22.1 217.1L22.3 218.1L19.7 219.6ZM46.9 256.1L49.1 259.2L50.7 260.0L53.9 261.0L52.1 263.8L49.9 267.1L49.5 264.6L48.3 263.5L49.3 261.5L48.9 259.7ZM46.9 265.3L48.9 267.3L47.1 270.7L44.9 274.1L42.5 275.5L39.5 274.4L41.3 271.4L44.3 269.0L46.1 266.1ZM36.5 236.7L40.1 239.6L39.5 239.7L36.3 237.1Z" fill="#f4f2ec"/><path d="M328.1 151.5L331.1 148.9L335.3 148.4L335.3 151.5L332.9 152.3L332.3 156.5L334.7 157.3L336.3 159.6L335.9 164.2L332.9 164.7L330.5 163.5L330.5 160.4L331.5 158.9L328.7 154.8ZM341.9 151.5L343.7 148.9L345.5 149.8L344.9 153.2L342.5 153.8ZM161.3 148.4L166.1 144.8L169.7 146.6L170.1 148.7L167.3 148.9L163.7 148.6ZM166.3 156.5L166.1 152.3L168.5 149.8L169.7 150.1L168.1 154.0L167.5 156.8ZM170.3 149.8L174.5 149.8L175.7 152.0L173.7 154.5L172.7 154.5L171.5 152.3ZM171.7 156.8L175.7 155.2L176.9 155.0L174.5 157.1ZM176.1 154.3L179.3 153.0L180.1 153.8L176.9 154.5ZM152.9 135.2L155.3 134.8L155.9 140.7L154.7 141.7ZM121.7 104.7L127.7 102.6L130.1 105.6L126.5 108.5ZM131.3 119.1L136.1 114.5L140.3 114.5L137.9 117.1L133.7 119.6ZM309.9 212.7L312.3 211.7L313.1 213.9L311.3 215.5L309.9 214.7ZM306.9 216.3L308.7 221.7L308.1 222.3L306.5 217.5ZM312.5 223.6L313.7 226.6L313.9 229.4L313.1 229.1L312.7 225.4Z" fill="#abc8f0"/></g>
<g filter="url(#sp)"><path d="M192.5 116.9L186.5 114.3L182.9 110.2L178.1 110.2L183.5 104.1L184.1 98.8L178.1 92.8L169.7 92.8L164.9 85.4L169.7 78.5L175.7 78.5L180.5 82.2L186.5 88.4L190.1 92.1L191.3 96.2L197.3 102.6L197.9 103.8L194.9 108.5L194.3 113.5ZM149.9 94.5L142.1 97.5L132.5 96.2L129.5 89.2L131.3 81.8L139.7 81.4L145.7 80.2L146.3 89.2ZM121.1 85.8L124.1 88.4L127.1 87.3L132.5 81.4L131.3 76.3L126.5 75.0L122.3 77.2ZM164.9 66.4L175.7 66.9L178.1 62.8L181.7 54.3L187.7 44.6L193.7 33.4L197.3 24.7L187.7 20.0L175.7 20.0L166.1 29.2L162.5 37.3L166.1 51.2L169.7 57.2ZM161.3 63.8L175.7 69.4L175.7 74.5L162.5 74.1ZM131.3 67.9L139.7 73.6L145.7 70.3L144.5 65.4L137.3 62.8ZM157.7 56.0L167.3 54.3L166.1 41.1L158.9 35.0L156.5 44.6ZM151.7 87.3L156.5 85.4L158.9 77.2L154.1 77.2L149.3 81.4ZM146.9 72.7L154.1 72.7L155.3 65.4L148.1 63.8ZM167.3 112.4L170.9 115.3L175.1 111.9L172.1 106.2L168.5 106.5ZM326.9 41.8L332.9 43.2L332.9 38.1L328.1 38.1ZM335.3 42.5L343.7 43.2L346.1 37.3L341.3 31.7L336.5 35.8Z" fill="#f4f2ec"/></g>
<text x="111.0" y="140.3" font-size="10.4" font-weight="bold" fill="#2a2a2a" text-anchor="start" opacity="1" textLength="80.8" lengthAdjust="spacingAndGlyphs" stroke="#f4f2ec" stroke-width="2" stroke-linejoin="round" paint-order="stroke" stroke-opacity="0.8">NORTH AMERICA</text>
<text x="281.0" y="145.1" font-size="10.4" font-weight="bold" fill="#2a2a2a" text-anchor="start" opacity="1" textLength="37" lengthAdjust="spacingAndGlyphs" stroke="#f4f2ec" stroke-width="2" stroke-linejoin="round" paint-order="stroke" stroke-opacity="0.8">EUROPE</text>
<text x="284.6" y="209.5" font-size="10.4" font-weight="bold" fill="#2a2a2a" text-anchor="start" opacity="1" textLength="33.6" lengthAdjust="spacingAndGlyphs" stroke="#f4f2ec" stroke-width="2" stroke-linejoin="round" paint-order="stroke" stroke-opacity="0.8">AFRICA</text>
<text x="170.2" y="235.5" font-size="10.4" font-weight="bold" fill="#2a2a2a" text-anchor="start" opacity="1" textLength="79.6" lengthAdjust="spacingAndGlyphs" stroke="#f4f2ec" stroke-width="2" stroke-linejoin="round" paint-order="stroke" stroke-opacity="0.8">SOUTH AMERICA</text>
<text x="35.0" y="242.6" font-size="10.4" font-weight="bold" fill="#2a2a2a" text-anchor="end" opacity="1" textLength="53" lengthAdjust="spacingAndGlyphs" stroke="#f4f2ec" stroke-width="2" stroke-linejoin="round" paint-order="stroke" stroke-opacity="0.8">AUSTRALIA</text>
<text x="58.0" y="171.4" font-size="9.1" font-weight="normal" fill="#5676b6" text-anchor="start" opacity="1" textLength="31" lengthAdjust="spacing">Pacific</text>
<text x="59.0" y="181.7" font-size="9.1" font-weight="normal" fill="#5676b6" text-anchor="start" opacity="1" textLength="29.2" lengthAdjust="spacing">Ocean</text>
<text x="202.7" y="173.1" font-size="9.1" font-weight="normal" fill="#5676b6" text-anchor="start" opacity="1" textLength="37.4" lengthAdjust="spacing">Atlantic</text>
<text x="207.2" y="183.5" font-size="9.1" font-weight="normal" fill="#5676b6" text-anchor="start" opacity="1" textLength="28.8" lengthAdjust="spacing">Ocean</text>
<text x="57.5" y="44.0" font-size="9.1" font-weight="normal" fill="#5676b6" text-anchor="start" opacity="0.8" textLength="31" lengthAdjust="spacing">Arctic</text>
<text x="59.4" y="54.0" font-size="9.1" font-weight="normal" fill="#5676b6" text-anchor="start" opacity="0.8" textLength="28.8" lengthAdjust="spacing">Ocean</text>
<text x="350.8" y="236.5" font-size="9.1" font-weight="normal" fill="#5676b6" text-anchor="start" opacity="1">I</text>
<text x="350.8" y="247.0" font-size="9.1" font-weight="normal" fill="#5676b6" text-anchor="start" opacity="1">O</text>
<path d="M168.2 132.1L184.6 132.1L176.4 153.8Z" fill="#231f20"/>
<circle cx="176.4" cy="114.6" r="19.9" fill="none" stroke="#231f20" stroke-width="7"/>
<rect x="205.5" y="274.0" width="142" height="6" fill="#3fb6f2" stroke="#3a3a3a" stroke-width="1"/>
</svg>
<div class="a" style="left:0;top:0;width:177px;height:74px;box-sizing:border-box;border:1px solid #868a92;background:linear-gradient(180deg,rgba(196,201,209,0.82) 0px,rgba(182,187,196,0.82) 4px,rgba(182,187,196,0.82) 100%);box-shadow:1px 2px 4px rgba(60,70,90,0.55);"></div>
<div class="t b" id="p1" style="left:6px;top:6.5px;color:#111;letter-spacing:-0.285px;">Resolver Inc.</div>
<div class="t" id="p2" style="left:6px;top:32px;color:#222;letter-spacing:-0.236px;">111 Peter St,</div>
<div class="t" id="p3" style="left:6px;top:52px;color:#222;letter-spacing:-0.167px;">Toronto, ON, Canada, M5V 2H1</div>
<svg class="a" style="left:147px;top:6px;" width="22" height="22" viewBox="0 0 22 22"><circle cx="11.400" cy="10.600" r="8.600" fill="none" stroke="#6b6b6b" stroke-width="1.600"/><path d="M8.600 7.800l5.600 5.600M14.200 7.800l-5.600 5.600" stroke="#6b6b6b" stroke-width="2"/></svg>
<div class="a" style="left:227px;top:6.500px;width:71.500px;height:23.500px;border-radius:10px;background:linear-gradient(180deg,#ececec,#d4d4d4);box-shadow:2px 3px 4px rgba(40,50,70,0.6);"></div>
<div class="t" id="c1" style="left:232.400px;top:10px;color:#a5a5a5;letter-spacing:-0.314px;">Aerial</div>
<div class="t b" id="c2" style="left:266px;top:10px;color:#5a5a5a;letter-spacing:-0.675px;">Road</div>
<div class="a" style="left:304px;top:9px;width:18px;height:18px;border-radius:50%;background:linear-gradient(180deg,#eeeeee,#cfcfcf);box-shadow:2px 3px 4px rgba(40,50,70,0.6);"></div>
<div class="a" style="left:326px;top:9px;width:18px;height:18px;border-radius:50%;background:linear-gradient(180deg,#eeeeee,#cfcfcf);box-shadow:2px 3px 4px rgba(40,50,70,0.6);"></div>
<svg class="a" style="left:303.500px;top:8.500px;" width="42" height="20" viewBox="0 0 42 20"><path d="M5 9.500h9M9.500 5v9M27 9.500h9" stroke="#5a5a5a" stroke-width="2.400"/></svg>
<div class="t" id="s1" style="left:296.800px;top:254.300px;color:#222;font-size:10.800px;letter-spacing:-0.103px;">5000 miles</div>
<div class="t" id="s2" style="left:131.300px;top:286px;color:#222;font-size:10px;letter-spacing:0.080px;">© 2025 Microsoft Corporation</div>
<div class="t" id="s3" style="left:275px;top:286px;color:#222;font-size:10px;letter-spacing:0.017px;">© 2025 TomTom</div>
<svg class="a" style="left:10px;top:272px;" width="56" height="26" viewBox="0 0 56 26"><g fill="#dfe3ea" stroke="#8f98a8" stroke-width="0.700" opacity="0.92"><path d="M3.500 2.500l3.600 1.300v11.700l5.400-3-2.600-1.200-1.600-4 8.200 2.900v4.200l-9.400 5.400-3.600-2z"/></g><text x="21" y="19.500" font-family="Liberation Sans, sans-serif" font-size="16.500" font-weight="bold" textLength="28.500" lengthAdjust="spacingAndGlyphs" fill="#dfe3ea" stroke="#8f98a8" stroke-width="0.600" paint-order="stroke">bing</text></svg>
</div>


<!-- scrollbar -->
<div class="a" style="left:984px;top:30px;width:10px;height:927px;background:#a6a6ae;"></div>
<div class="a navy" style="left:986px;top:105px;width:6px;height:834px;"></div>
<svg class="a" style="left:984px;top:34px;" width="10" height="12" viewBox="984 34 10 12"><path d="M985.600 43.200h7.400l-3.700-7.200z" fill="#003a78"/></svg>
<svg class="a" style="left:984px;top:943px;" width="10" height="12" viewBox="984 943 10 12"><path d="M985.400 945h7.600l-3.800 7.400z" fill="#003a78"/></svg>
</div>
</body>
</html>
